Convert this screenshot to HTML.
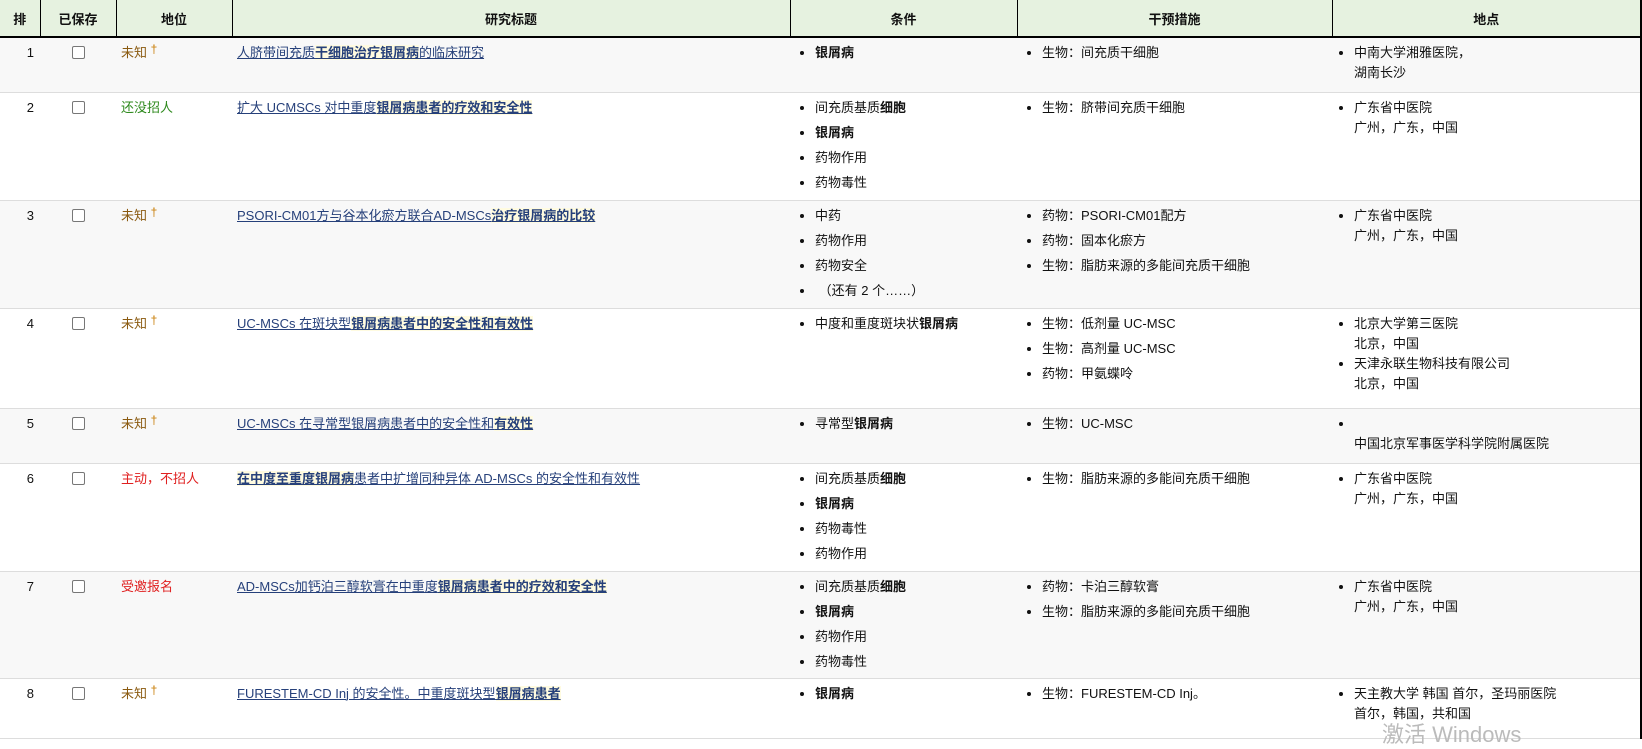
<!DOCTYPE html>
<html><head><meta charset="utf-8"><style>
*{box-sizing:border-box}
body{margin:0;background:#fff;font-family:"Liberation Sans","Noto Sans CJK SC",sans-serif;font-size:13px;color:#111;width:1642px;height:734px;overflow:hidden;position:relative}
table{border-collapse:collapse;table-layout:fixed;width:1641px;position:absolute;left:0;top:0}
th{background:#e6f2e0;height:37px;font-weight:bold;font-size:13px;border-right:1px solid #000;border-bottom:2px solid #000;padding:0}
th:last-child{border-right:2px solid #000}
td{vertical-align:top;padding:5px 5px 0;line-height:20px;border-bottom:1px solid #ddd}
td:last-child{border-right:2px solid #000}
tr.o td{background:#f8f8f8}
td.n{text-align:right;padding-right:6px}
td.c{text-align:center}
.cb{display:inline-block;width:13px;height:13px;border:1px solid #777;border-radius:2px;background:#fff;margin-top:3px}
ul{margin:0;padding:0 0 0 20px}
li{margin-bottom:5px;line-height:20px}
td.loc ul{padding-left:17px}
td.loc li{margin-bottom:0}
a{color:#26407a;text-decoration:underline;text-decoration-thickness:1px}
a b{background:#fffbe0}
.u{color:#8a5a10}.u sup{color:#c77a00;font-size:12px;vertical-align:4px;line-height:0}
.g{color:#2f8a1e}.r{color:#e02020}
.wm{position:absolute;left:1382px;top:717px;font-size:22px;color:#bbb}
</style></head><body>
<table>
<colgroup><col style="width:40px"><col style="width:76px"><col style="width:116px"><col style="width:558px"><col style="width:227px"><col style="width:315px"><col style="width:309px"></colgroup>
<tr><th>排</th><th>已保存</th><th>地位</th><th>研究标题</th><th>条件</th><th>干预措施</th><th>地点</th></tr>
<tr class="o" style="height:55px"><td class="n">1</td><td class="c"><span class="cb"></span></td><td class="u">未知 <sup>†</sup></td><td><a>人脐带间充质<b>干细胞治疗银屑病</b>的临床研究</a></td><td><ul><li><b>银屑病</b></li></ul></td><td><ul><li>生物：间充质干细胞</li></ul></td><td class="loc"><ul><li>中南大学湘雅医院，<br>湖南长沙</li></ul></td></tr>
<tr style="height:108px"><td class="n">2</td><td class="c"><span class="cb"></span></td><td class="g">还没招人</td><td><a>扩大 UCMSCs 对中重度<b>银屑病患者的疗效和安全性</b></a></td><td><ul><li>间充质基质<b>细胞</b></li><li><b>银屑病</b></li><li>药物作用</li><li>药物毒性</li></ul></td><td><ul><li>生物：脐带间充质干细胞</li></ul></td><td class="loc"><ul><li>广东省中医院<br>广州，广东，中国</li></ul></td></tr>
<tr class="o" style="height:108px"><td class="n">3</td><td class="c"><span class="cb"></span></td><td class="u">未知 <sup>†</sup></td><td><a>PSORI-CM01方与谷本化瘀方联合AD-MSCs<b>治疗银屑病的比较</b></a></td><td><ul><li>中药</li><li>药物作用</li><li>药物安全</li><li>&nbsp;（还有 2 个……）</li></ul></td><td><ul><li>药物：PSORI-CM01配方</li><li>药物：固本化瘀方</li><li>生物：脂肪来源的多能间充质干细胞</li></ul></td><td class="loc"><ul><li>广东省中医院<br>广州，广东，中国</li></ul></td></tr>
<tr style="height:100px"><td class="n">4</td><td class="c"><span class="cb"></span></td><td class="u">未知 <sup>†</sup></td><td><a>UC-MSCs 在斑块型<b>银屑病患者中的安全性和有效性</b></a></td><td><ul><li>中度和重度斑块状<b>银屑病</b></li></ul></td><td><ul><li>生物：低剂量 UC-MSC</li><li>生物：高剂量 UC-MSC</li><li>药物：甲氨蝶呤</li></ul></td><td class="loc"><ul><li>北京大学第三医院<br>北京，中国</li><li>天津永联生物科技有限公司<br>北京，中国</li></ul></td></tr>
<tr class="o" style="height:55px"><td class="n">5</td><td class="c"><span class="cb"></span></td><td class="u">未知 <sup>†</sup></td><td><a>UC-MSCs 在寻常型银屑病患者中的安全性和<b>有效性</b></a></td><td><ul><li>寻常型<b>银屑病</b></li></ul></td><td><ul><li>生物：UC-MSC</li></ul></td><td class="loc"><ul><li>&nbsp;<br>中国北京军事医学科学院附属医院</li></ul></td></tr>
<tr style="height:108px"><td class="n">6</td><td class="c"><span class="cb"></span></td><td class="r">主动，不招人</td><td><a><b>在中度至重度银屑病</b>患者中扩增同种异体 AD-MSCs 的安全性和有效性</a></td><td><ul><li>间充质基质<b>细胞</b></li><li><b>银屑病</b></li><li>药物毒性</li><li>药物作用</li></ul></td><td><ul><li>生物：脂肪来源的多能间充质干细胞</li></ul></td><td class="loc"><ul><li>广东省中医院<br>广州，广东，中国</li></ul></td></tr>
<tr class="o" style="height:107px"><td class="n">7</td><td class="c"><span class="cb"></span></td><td class="r">受邀报名</td><td><a>AD-MSCs加钙泊三醇软膏在中重度<b>银屑病患者中的疗效和安全性</b></a></td><td><ul><li>间充质基质<b>细胞</b></li><li><b>银屑病</b></li><li>药物作用</li><li>药物毒性</li></ul></td><td><ul><li>药物：卡泊三醇软膏</li><li>生物：脂肪来源的多能间充质干细胞</li></ul></td><td class="loc"><ul><li>广东省中医院<br>广州，广东，中国</li></ul></td></tr>
<tr style="height:60px"><td class="n">8</td><td class="c"><span class="cb"></span></td><td class="u">未知 <sup>†</sup></td><td><a>FURESTEM-CD Inj 的安全性。中重度斑块型<b>银屑病患者</b></a></td><td><ul><li><b>银屑病</b></li></ul></td><td><ul><li>生物：FURESTEM-CD Inj。</li></ul></td><td class="loc"><ul><li>天主教大学 韩国 首尔，圣玛丽医院<br>首尔，韩国，共和国</li></ul></td></tr>
</table>
<div class="wm">激活 Windows</div>
</body></html>
